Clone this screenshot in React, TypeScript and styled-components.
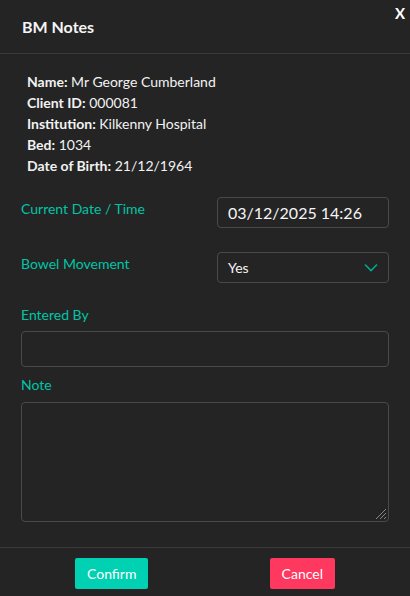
import React from "react";
import styled, { createGlobalStyle } from "styled-components";

const Global = createGlobalStyle`
  html, body { margin: 0; padding: 0; background: #242424; }
  body { font-family: "Segoe UI", Lato, "Open Sans", sans-serif; color: #f0f0f0; }
  * { box-sizing: border-box; }
`;

const Modal = styled.div`
  width: 410px;
  height: 596px;
  background: #242424;
  display: flex;
  flex-direction: column;
  position: relative;
`;

const Header = styled.div`
  height: 54px;
  border-bottom: 1px solid #3a3a3a;
  display: flex;
  align-items: center;
  padding: 0 22px;
`;

const Title = styled.h1`
  margin: 0;
  font-size: 16px;
  font-weight: 700;
  color: #f5f5f5;
`;

const Close = styled.button`
  position: absolute;
  top: 4px;
  right: 5px;
  background: none;
  border: none;
  color: #fff;
  font-family: Lato, sans-serif;
  font-weight: 700;
  font-size: 15px;
  padding: 0;
  cursor: pointer;
`;

const Body = styled.div`
  flex: 1;
  padding: 17px 21px 0 21px;
  display: flex;
  flex-direction: column;
`;

const Info = styled.div`
  padding-left: 6px;
  display: flex;
  flex-direction: column;
  font-size: 14px;
  line-height: 21px;
  color: #f2f2f2;
  margin-bottom: 21px;
`;

const InfoKey = styled.b`
  font-weight: 700;
`;

const Row = styled.div<{ $gap: number }>`
  display: flex;
  align-items: flex-start;
  justify-content: space-between;
  margin-bottom: ${(p) => p.$gap}px;
`;

const Label = styled.label`
  color: #00c4a7;
  font-size: 14px;
  line-height: 20px;
  display: block;
`;

const RowLabel = styled(Label)`
  padding-top: 2px;
`;

const SmallBox = styled.div`
  width: 172px;
  height: 31px;
  border: 1px solid #4a4a4a;
  border-radius: 4px;
  display: flex;
  align-items: center;
  justify-content: space-between;
  padding: 0 10px;
`;

const DateText = styled.span`
  font-size: 16px;
  color: #f5f5f5;
`;

const SelectText = styled.span`
  font-size: 14px;
  color: #f5f5f5;
`;

const Field = styled.div<{ $gap: number }>`
  display: flex;
  flex-direction: column;
  gap: ${(p) => p.$gap}px;
  margin-bottom: 8px;
`;

const TextInput = styled.div`
  height: 36px;
  border: 1px solid #4a4a4a;
  border-radius: 4px;
`;

const TextArea = styled.div`
  height: 120px;
  border: 1px solid #4a4a4a;
  border-radius: 4px;
  position: relative;
`;

const Grip = styled.svg`
  position: absolute;
  right: 1px;
  bottom: 1px;
`;

const Footer = styled.div`
  height: 49px;
  margin-top: auto;
  border-top: 1px solid #3a3a3a;
  display: flex;
  justify-content: space-between;
  align-items: flex-start;
  padding: 10px 75px 0 75px;
`;

const Button = styled.button<{ $bg: string }>`
  height: 31px;
  padding: 0 12px;
  border: none;
  border-radius: 2px;
  background: ${(p) => p.$bg};
  color: #fff;
  font-family: inherit;
  font-size: 14px;
  cursor: pointer;
`;

export default function App() {
  return (
    <>
      <Global />
      <Modal>
        <Header>
          <Title>BM Notes</Title>
        </Header>
        <Close>X</Close>
        <Body>
          <Info>
            <span><InfoKey>Name:</InfoKey> Mr George Cumberland</span>
            <span><InfoKey>Client ID:</InfoKey> 000081</span>
            <span><InfoKey>Institution:</InfoKey> Kilkenny Hospital</span>
            <span><InfoKey>Bed:</InfoKey> 1034</span>
            <span><InfoKey>Date of Birth:</InfoKey> 21/12/1964</span>
          </Info>
          <Row $gap={24}>
            <RowLabel>Current Date / Time</RowLabel>
            <SmallBox>
              <DateText>03/12/2025 14:26</DateText>
            </SmallBox>
          </Row>
          <Row $gap={22}>
            <RowLabel>Bowel Movement</RowLabel>
            <SmallBox>
              <SelectText>Yes</SelectText>
              <svg width="14" height="9" viewBox="0 0 14 9">
                <path d="M1 1.5 L7 7.5 L13 1.5" fill="none" stroke="#00a88f" strokeWidth="1.6" />
              </svg>
            </SmallBox>
          </Row>
          <Field $gap={6}>
            <Label>Entered By</Label>
            <TextInput />
          </Field>
          <Field $gap={7}>
            <Label>Note</Label>
            <TextArea>
              <Grip width="14" height="14" viewBox="0 0 14 14">
                <path d="M13 3 L3 13 M13 7 L7 13 M13 11 L11 13" stroke="#888" strokeWidth="1" />
              </Grip>
            </TextArea>
          </Field>
        </Body>
        <Footer>
          <Button $bg="#00d1b2">Confirm</Button>
          <Button $bg="#ff3860">Cancel</Button>
        </Footer>
      </Modal>
    </>
  );
}
